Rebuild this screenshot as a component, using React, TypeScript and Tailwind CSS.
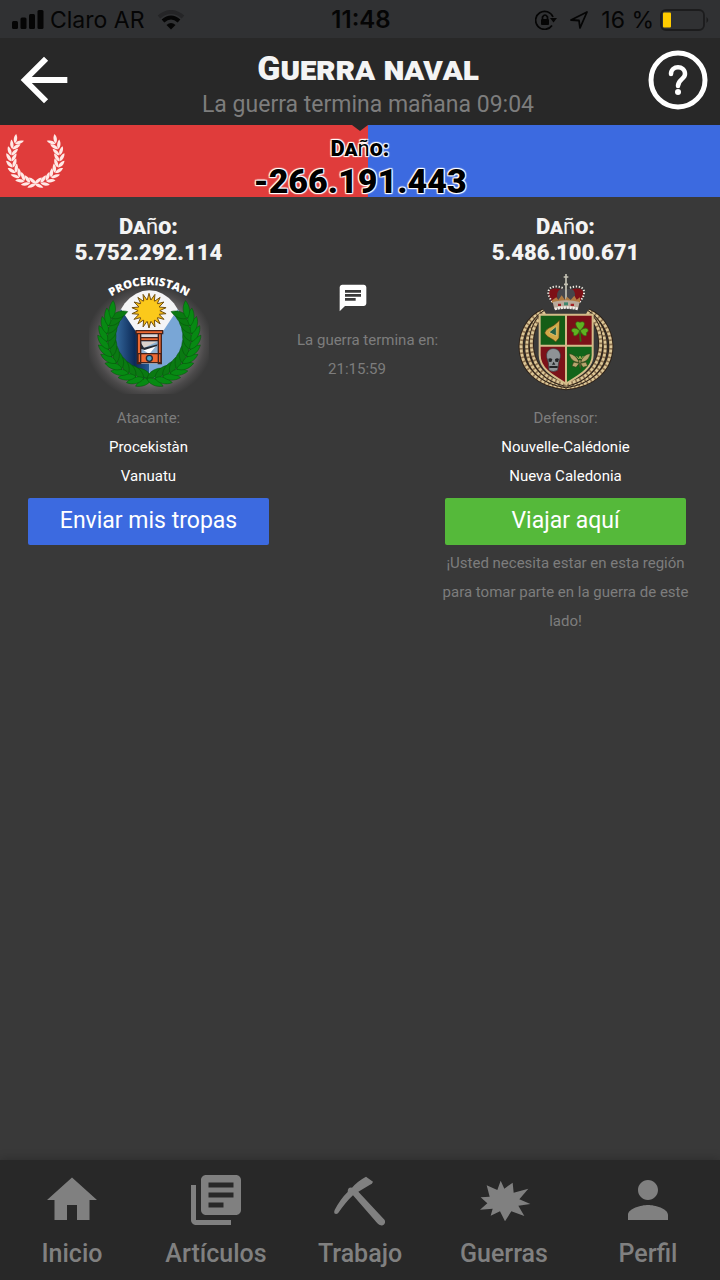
import React from "react";

const leafPath = "M-20 0C-10 -10 8 -9 20 0C8 9 -10 10 -20 0Z";

type WreathProps = {
  cx: number;
  cy: number;
  rx: number;
  ry: number;
  from: number;
  to: number;
  count: number;
  scale: number;
  offset: number;
  outer: string;
  inner: string;
  stroke?: string;
};

function Branch({ cx, cy, rx, ry, from, to, count, scale, offset, outer, inner, stroke }: WreathProps) {
  const leaves = [];
  for (let i = 0; i < count; i++) {
    const deg = from + ((to - from) * i) / (count - 1);
    const a = (deg * Math.PI) / 180;
    const tangent = (Math.atan2(ry * Math.cos(a), -rx * Math.sin(a)) * 180) / Math.PI;
    for (const side of [-1, 1]) {
      const x = cx + (rx + side * offset) * Math.cos(a);
      const y = cy + (ry + side * offset) * Math.sin(a);
      leaves.push(
        <path
          key={`${i}${side}`}
          d={leafPath}
          fill={side > 0 ? outer : inner}
          stroke={stroke}
          strokeWidth={stroke ? 1 : 0}
          transform={`translate(${x} ${y}) rotate(${tangent - side * 32}) scale(${scale})`}
        />,
      );
    }
  }
  return <g>{leaves}</g>;
}

function Wreath(props: WreathProps) {
  return (
    <>
      <Branch {...props} />
      <g transform={`translate(${props.cx * 2} 0) scale(-1 1)`}>
        <Branch {...props} />
      </g>
    </>
  );
}

function rays(cx: number, cy: number, outer: number, inner: number, n: number) {
  return Array.from({ length: n * 2 }, (_, i) => {
    const r = i % 2 === 0 ? outer : inner;
    const a = (Math.PI * i) / n - Math.PI / 2;
    return `${cx + r * Math.cos(a)},${cy + r * Math.sin(a)}`;
  }).join(" ");
}

function AttackerEmblem() {
  return (
    <svg viewBox="24 27 360 360" className="size-30" role="img" aria-label="Escudo de Procekistàn">
      <defs>
        <radialGradient id="halo">
          <stop offset="0.72" stopColor="#8a8386" stopOpacity="0.9" />
          <stop offset="0.88" stopColor="#8a8386" stopOpacity="0.3" />
          <stop offset="1" stopColor="#8a8386" stopOpacity="0" />
        </radialGradient>
        <linearGradient id="deep" x1="0" x2="1">
          <stop offset="0" stopColor="#3b72a8" />
          <stop offset="0.6" stopColor="#0c2a57" />
          <stop offset="1" stopColor="#245a94" />
        </linearGradient>
        <clipPath id="disc">
          <ellipse cx="205" cy="208" rx="104" ry="132" />
        </clipPath>
        <path id="arc" d="M84 99Q203 21 325 99" />
      </defs>
      <ellipse cx="205" cy="232" rx="190" ry="172" fill="url(#halo)" opacity="0.7" />
      <g clipPath="url(#disc)">
        <rect x="95" y="70" width="220" height="280" fill="#f4f4f6" />
        <path d="M95 95L205 260V350H95Z" fill="url(#deep)" />
        <path d="M315 95L205 260V350H315Z" fill="#79a6d6" />
      </g>
      <Wreath cx={205} cy={216} rx={126} ry={124} from={97} to={217} count={12} scale={1.35} offset={13} outer="#078a13" inner="#0a7a12" stroke="#064d0b" />
      <polygon points={rays(204, 137, 52, 32, 18)} fill="#f8bd16" stroke="#73510f" strokeWidth="3" />
      <circle cx="204" cy="137" r="32" fill="#fbc91b" />
      <rect x="170" y="198" width="70" height="98" fill="#d9dadd" />
      <path d="M180 229H232V268H180Z" fill="#8fb2d2" />
      <path d="M182 230H228L182 252Z" fill="#ddd3cc" />
      <path d="M182 252L228 239L205 267Z" fill="#fff" />
      <path d="M180 235L189 248L230 238L228 243L191 255L180 252Z" fill="#222a35" />
      <g fill="#ec6932" stroke="#44221b" strokeWidth="4">
        <path d="M165 197H245V206H165ZM169 206H179V296H169ZM232 206H241V296H232ZM179 218H232V227H179ZM171 266H240V293H171Z" />
      </g>
      <circle cx="205" cy="280" r="9" fill="#49a5ce" stroke="#222a35" strokeWidth="4" />
      <text fill="#fff" className="font-['Open_Sans'] text-[34px] font-extrabold">
        <textPath href="#arc" startOffset="50%" textAnchor="middle">
          PROCEKISTAN
        </textPath>
      </text>
    </svg>
  );
}

const ropes = [
  "M130 138C36 176 24 352 197 368",
  "M134 142C58 190 46 340 197 362",
  "M124 155C80 190 66 328 197 358",
];

function Ropes() {
  return (
    <g fill="none">
      {ropes.map((d) => (
        <g key={d}>
          <path d={d} stroke="#2a2018" strokeWidth="15" />
          <path d={d} stroke="#8d7250" strokeWidth="10" />
          <path d={d} stroke="#dcc797" strokeWidth="8" strokeDasharray="8 5" />
        </g>
      ))}
    </g>
  );
}

function DefenderEmblem() {
  return (
    <svg viewBox="17 27 360 360" className="size-30" role="img" aria-label="Escudo de Nouvelle-Calédonie">
      <defs>
        <clipPath id="shield">
          <path d="M118 149H277V270C277 312 233 334 197 356C160 334 118 312 118 270Z" />
        </clipPath>
      </defs>
      <Ropes />
      <g transform="translate(394 0) scale(-1 1)">
        <Ropes />
      </g>
      <g clipPath="url(#shield)">
        <path d="M118 149H197V242H118Z" fill="#145d16" />
        <path d="M197 149H277V242H197Z" fill="#7a1118" />
        <path d="M118 242H197V360H118Z" fill="#7c1219" />
        <path d="M197 242H277V360H197Z" fill="#12641a" />
      </g>
      <path d="M118 149H277V270C277 312 233 334 197 356C160 334 118 312 118 270ZM197 149V356M118 242H277" fill="none" stroke="#d3bb88" strokeWidth="6" />
      <path d="M133 204C142 183 153 193 178 165L176 219L166 231C157 219 143 221 133 204Z" fill="#d2a947" stroke="#4c3b14" strokeWidth="2" />
      <path d="M146 202L168 184V213Z" fill="#235f44" stroke="#eed37b" strokeWidth="2" />
      <g fill="#5fb321" stroke="#2e6f10" strokeWidth="2">
        <path d="M239 197C222 182 222 165 239 172C256 165 257 182 239 197Z" />
        <path d="M238 197C218 179 206 198 220 203C217 219 232 213 238 197Z" />
        <path d="M240 197C260 179 271 198 258 203C262 219 246 213 240 197Z" />
        <path d="M238 197L241 230" strokeWidth="5" />
      </g>
      <path d="M139 277C133 242 185 242 180 277L175 293L172 316Q159 323 146 316L144 293Z" fill="#8e9396" stroke="#343638" strokeWidth="2" />
      <path d="M144 281Q151 277 156 283L153 291L145 290ZM164 283Q170 277 176 282L173 291L165 290ZM160 290L155 299H165ZM147 303H172V309H147Z" fill="#222426" />
      <g fill="#b7a56e" stroke="#344319" strokeWidth="2">
        <path d="M237 292C228 272 216 267 206 266C210 282 219 292 237 292ZM240 292C248 272 258 267 270 266C266 282 257 292 240 292Z" />
        <path d="M237 295L220 291L215 303L227 307ZM240 295L257 291L262 303L248 307ZM235 285H242L240 314Z" />
        <path d="M229 274L236 282L239 273L242 282L249 273" fill="none" stroke="#9aa753" strokeWidth="3" />
      </g>
      <path d="M154 109C129 70 160 62 197 78C238 61 265 72 240 109Z" fill="#7d1117" />
      <path d="M173 106C164 81 177 66 197 74C217 65 231 81 221 106Z" fill="#46464b" />
      <path d="M156 111C129 75 151 55 188 69M238 111C267 75 245 55 206 69" fill="none" stroke="#eee9df" strokeWidth="6" strokeDasharray="4 5" />
      <path d="M197 27V110M190 36H204M191 58H203" stroke="#c4c1b3" strokeWidth="5" />
      <path d="M155 106L168 97L174 105L184 91L194 105L200 95L211 105L222 92L229 104L239 97V114H155Z" fill="#b17c43" />
      <path d="M157 111Q197 100 238 111L233 132Q197 123 162 132Z" fill="#b9aa9b" />
      <path d="M173 116H182V123H173ZM211 116H221V123H211Z" fill="#a32124" />
      <path d="M191 112H203V121H191Z" fill="#3d876e" />
      <path d="M163 132Q197 123 234 132" fill="none" stroke="#f3efe9" strokeWidth="8" strokeDasharray="7 2" />
    </svg>
  );
}

const display = "font-black [font-variant-caps:small-caps]";

function Damage() {
  return (
    <>
      Da<span className="font-normal [font-variant-caps:normal]">ñ</span>o:
    </>
  );
}

type SideProps = {
  damage: string;
  emblem: React.ReactNode;
  role: string;
  state: string;
  region: string;
  action: string;
  buttonClass: string;
  note?: string;
};

function Side({ damage, emblem, role, state, region, action, buttonClass, note }: SideProps) {
  return (
    <section className="flex flex-col items-center text-center">
      <h2 className={`${display} text-[22px] leading-[26px] text-[#f4f4f4]`}>
        <Damage />
        <br />
        {damage}
      </h2>
      <div className="mt-2">{emblem}</div>
      <div className="mt-2.5 text-[15px] leading-[29px] text-white">
        <p className="text-[#7d7d7d]">{role}</p>
        <a href="#estado" className="block">{state}</a>
        <a href="#region" className="block">{region}</a>
      </div>
      <button type="button" className={`mt-[7px] h-[47px] w-full max-w-[241px] rounded-[2px] text-[23px] text-white ${buttonClass}`}>
        {action}
      </button>
      {note && <p className="mt-1 px-1 text-[15px] leading-[29px] text-[#7d7d7d]">{note}</p>}
    </section>
  );
}

function StatusBar() {
  return (
    <div className="grid h-[38px] grid-cols-[1fr_auto_1fr] items-center bg-[#303133] pt-0.5 pr-2.5 pl-3 font-['Inter',sans-serif] text-[23px] text-[#050505]">
      <div className="flex items-center">
        <svg viewBox="0 0 32 20" className="mr-1.5 h-5 w-8" fill="currentColor" aria-hidden="true">
          <rect x="0" y="11" width="6" height="8" rx="1.5" />
          <rect x="8.5" y="7.500" width="6" height="11.500" rx="1.5" />
          <rect x="17" y="4" width="6" height="15" rx="1.5" />
          <rect x="25.5" y="0" width="6" height="19" rx="1.5" />
        </svg>
        Claro AR
        <svg viewBox="0 0 28 20" className="ml-3 h-5 w-7" fill="none" stroke="currentColor" aria-hidden="true">
          <path d="M2 7Q14 -3 26 7" strokeWidth="4" opacity="0.25" />
          <path d="M6 11Q14 4 22 11" strokeWidth="4" />
          <path d="M9.500 15Q14 11 18.500 15L14 19.500Z" fill="currentColor" stroke="none" />
        </svg>
      </div>
      <span className="text-2xl font-semibold">11:48</span>
      <div className="flex items-center justify-end whitespace-nowrap">
        <svg viewBox="0 0 22 20" className="mr-3 h-5 w-[22px]" fill="none" stroke="currentColor" strokeWidth="1.7" aria-hidden="true">
          <path d="M18 7A9 9 0 1 0 17 15.500" />
          <path d="M15 8H22L18.500 12.500Z" fill="currentColor" stroke="none" />
          <rect x="6" y="9" width="8" height="6" rx="1" fill="currentColor" stroke="none" />
          <path d="M7.500 9V7Q10 3 12.500 7V9" />
        </svg>
        <svg viewBox="0 0 20 20" className="mr-3 size-5" fill="none" stroke="currentColor" strokeWidth="1.8" strokeLinejoin="round" aria-hidden="true">
          <path d="M18 2L2 10L10 10.500L11 18Z" />
        </svg>
        16 %
        <svg viewBox="0 0 50 22" className="ml-1.5 h-[22px] w-[50px]" aria-hidden="true">
          <rect x="1" y="1" width="43" height="20" rx="5" fill="none" stroke="#1c1c1d" strokeWidth="1.8" />
          <rect x="3" y="3.500" width="8" height="15" rx="1" fill="#ffcc00" />
          <path d="M46.500 8Q50 11 46.500 14Z" fill="#1c1c1d" />
        </svg>
      </div>
    </div>
  );
}

const tabs = [
  { label: "Inicio", box: "0 0 24 24", d: "M10 20v-6h4v6h5v-8h3L12 3 2 12h3v8z" },
  {
    label: "Artículos",
    box: "0 0 24 24",
    d: "M4 6H2v14c0 1.1.9 2 2 2h14v-2H4V6zm16-4H8c-1.1 0-2 .9-2 2v12c0 1.1.9 2 2 2h12c1.1 0 2-.9 2-2V4c0-1.1-.9-2-2-2zm-1 9H9V9h10v2zm-4 4H9v-2h6v2zm4-8H9V5h10v2z",
  },
  {
    label: "Trabajo",
    box: "16 0 180 180",
    d: "M124 20L145 35Q143 42 136 44L101 65L180 150Q184 160 175 166Q164 168 158 160L85 76Q65 94 40 130Q34 134 29 130Q28 124 30 120Q48 86 69 66Q69 51 82 53Q98 34 124 20Z",
  },
  {
    label: "Guerras",
    box: "0 0 180 180",
    d: "M80 32L91 56L116 38L119 68L163 56L136 88L169 102L133 107L151 138L112 124L93 154L78 124L50 137L56 116L18 119L40 100L20 82L47 80L38 46L70 60Z",
  },
  {
    label: "Perfil",
    box: "0 0 24 24",
    d: "M12 12c2.210 0 4-1.790 4-4s-1.790-4-4-4-4 1.790-4 4 1.790 4 4 4zm0 2c-2.670 0-8 1.340-8 4v2h16v-2c0-2.660-5.330-4-8-4z",
  },
];

export default function App() {
  return (
    <div className="flex min-h-screen flex-col bg-[#393939] font-['Roboto',sans-serif]">
      <StatusBar />
      <header className="flex h-[87px] items-center bg-[#282828]">
        <button type="button" aria-label="Volver" className="flex w-[88px] shrink-0 justify-center pb-1">
          <svg viewBox="0 0 24 24" className="size-[70px]" fill="#fff" aria-hidden="true">
            <path d="M20 11H7.830l5.590-5.590L12 4l-8 8 8 8 1.410-1.410L7.830 13H20v-2z" />
          </svg>
        </button>
        <div className="flex-1 pt-1 text-center">
          <h1 className={`${display} text-[34px] leading-[42px] text-[#f4f4f4]`}>Guerra naval</h1>
          <p className="text-[23px] leading-8 text-[#7d7d7d]">La guerra termina mañana 09:04</p>
        </div>
        <button type="button" aria-label="Ayuda" className="w-[72px] shrink-0 pb-1">
          <svg viewBox="0 0 60 60" className="size-[60px]" fill="none" stroke="#fff" aria-hidden="true">
            <circle cx="30" cy="30" r="27" strokeWidth="5" />
            <path d="M23 24C23 15 37 15 37 24C37 29 30 29.500 30 36" strokeWidth="4.500" strokeLinecap="round" />
            <circle cx="30" cy="42" r="3" fill="#fff" stroke="none" />
          </svg>
        </button>
      </header>

      <div className="relative flex h-[72px] items-center bg-[linear-gradient(to_right,#e03c3b_51.1%,#3c6ae0_51.1%)]">
        <svg viewBox="0 0 225 210" className="absolute top-0 left-0 h-[70px] w-[75px]" aria-hidden="true">
          <Wreath cx={106} cy={98} rx={72} ry={77} from={98} to={222} count={10} scale={0.7} offset={8} outer="#ffe9e6" inner="#ffe9e6" />
        </svg>
        <svg viewBox="0 0 16 6" className="absolute top-0 left-1/2 h-1.5 w-4 -translate-x-1/2" aria-hidden="true">
          <path d="M0 0H16L8 6Z" fill="#282828" />
        </svg>
        <p
          className={`${display} w-full pt-3 text-center text-black [text-shadow:-1px_-1px_1px_#fff,1px_-1px_1px_#fff,-1px_1px_1px_#fff,1px_1px_1px_#fff,0_0_2px_#fff]`}
        >
          <span className="block text-[22px] leading-7">
            <Damage />
          </span>
          <span className="block text-[34px] leading-9">-266.191.443</span>
        </p>
      </div>

      <main className="grid grid-cols-[1fr_120px_1fr] gap-3.5 pt-[17px] pr-5 pb-8 pl-3.5">
        <Side
          damage="5.752.292.114"
          emblem={<AttackerEmblem />}
          role="Atacante:"
          state="Procekistàn"
          region="Vanuatu"
          action="Enviar mis tropas"
          buttonClass="bg-[#3c6ae0]"
        />
        <section className="pt-[68px] text-center text-[15px] leading-[29px] whitespace-nowrap text-[#7d7d7d]">
          <button type="button" aria-label="Chat de la guerra" className="mr-2 block w-28">
            <svg viewBox="0 0 24 24" className="mx-auto size-8" fill="#fff" aria-hidden="true">
              <path d="M20 2H4c-1.100 0-1.990.9-1.990 2L2 22l4-4h14c1.100 0 2-.9 2-2V4c0-1.100-.9-2-2-2zM6 9h12v2H6V9zm8 5H6v-2h8v2zm4-6H6V6h12v2z" />
            </svg>
          </button>
          <p className="mt-3">La guerra termina en:</p>
          <p>21:15:59</p>
        </section>
        <Side
          damage="5.486.100.671"
          emblem={<DefenderEmblem />}
          role="Defensor:"
          state="Nouvelle-Calédonie"
          region="Nueva Caledonia"
          action="Viajar aquí"
          buttonClass="bg-[#55b93a]"
          note="¡Usted necesita estar en esta región para tomar parte en la guerra de este lado!"
        />
      </main>

      <nav className="mt-auto grid h-30 grid-cols-5 bg-[#282828] pt-2.5 shadow-[0_0_10px_rgba(0,0,0,0.25)]">
        {tabs.map((tab) => (
          <a key={tab.label} href={`#${tab.label}`} className="flex flex-col items-center text-[25px] leading-8 font-medium text-[#808080]">
            <svg viewBox={tab.box} className="size-[60px]" fill="currentColor" aria-hidden="true">
              <path d={tab.d} />
            </svg>
            <span className="mt-2">{tab.label}</span>
          </a>
        ))}
      </nav>
    </div>
  );
}
